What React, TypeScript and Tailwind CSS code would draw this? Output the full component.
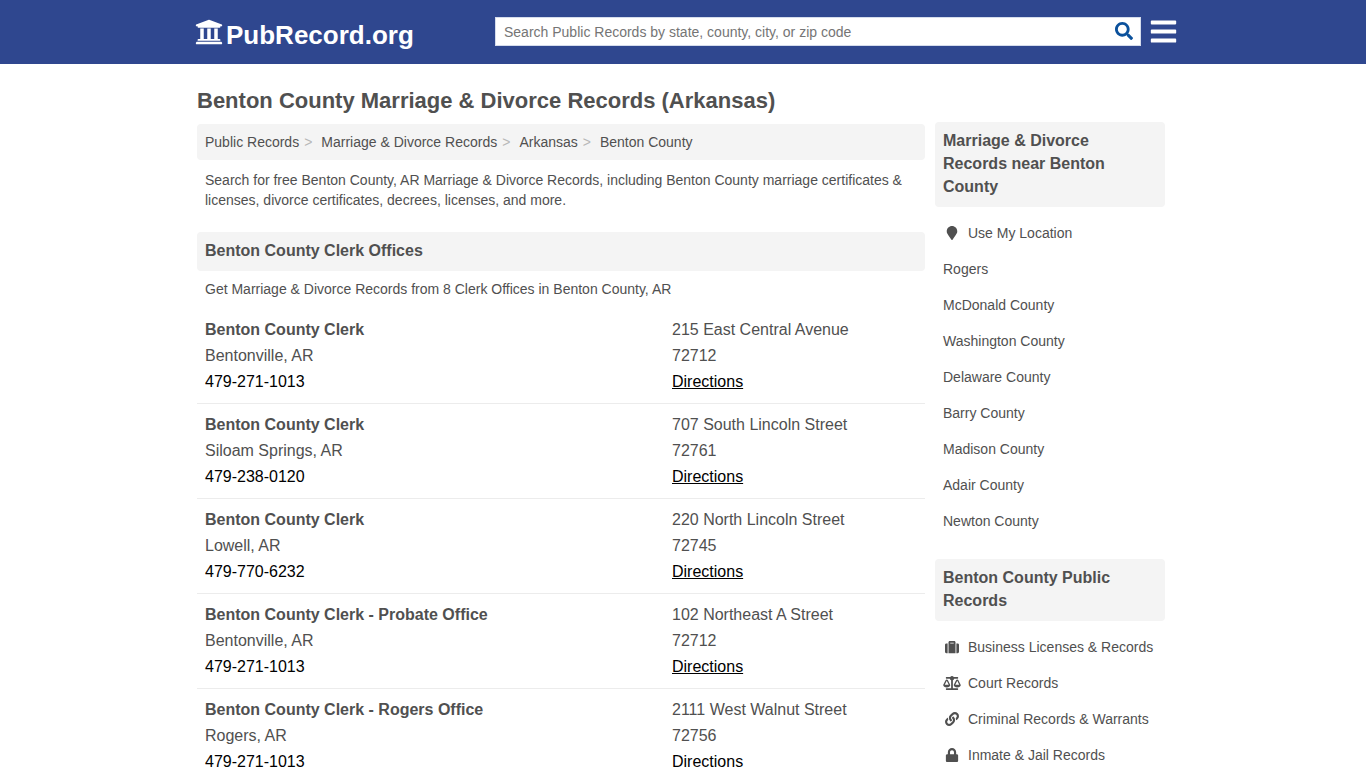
import type { ReactNode } from "react";
import {
  FaBalanceScale,
  FaBars,
  FaLink,
  FaLock,
  FaMapMarker,
  FaSearch,
  FaSuitcase,
  FaUniversity,
} from "react-icons/fa";

const crumbs = [
  "Public Records",
  "Marriage & Divorce Records",
  "Arkansas",
  "Benton County",
];

const offices = [
  {
    name: "Benton County Clerk",
    city: "Bentonville, AR",
    phone: "479-271-1013",
    street: "215 East Central Avenue",
    zip: "72712",
  },
  {
    name: "Benton County Clerk",
    city: "Siloam Springs, AR",
    phone: "479-238-0120",
    street: "707 South Lincoln Street",
    zip: "72761",
  },
  {
    name: "Benton County Clerk",
    city: "Lowell, AR",
    phone: "479-770-6232",
    street: "220 North Lincoln Street",
    zip: "72745",
  },
  {
    name: "Benton County Clerk - Probate Office",
    city: "Bentonville, AR",
    phone: "479-271-1013",
    street: "102 Northeast A Street",
    zip: "72712",
  },
  {
    name: "Benton County Clerk - Rogers Office",
    city: "Rogers, AR",
    phone: "479-271-1013",
    street: "2111 West Walnut Street",
    zip: "72756",
  },
];

type SideLink = { label: string; icon?: ReactNode };

const nearby: SideLink[] = [
  { label: "Use My Location", icon: <FaMapMarker /> },
  { label: "Rogers" },
  { label: "McDonald County" },
  { label: "Washington County" },
  { label: "Delaware County" },
  { label: "Barry County" },
  { label: "Madison County" },
  { label: "Adair County" },
  { label: "Newton County" },
];

const publicRecords: SideLink[] = [
  { label: "Business Licenses & Records", icon: <FaSuitcase /> },
  {
    label: "Court Records",
    icon: <FaBalanceScale className="h-3.5 w-[18px]" />,
  },
  { label: "Criminal Records & Warrants", icon: <FaLink /> },
  { label: "Inmate & Jail Records", icon: <FaLock /> },
];

function Header() {
  return (
    <header className="bg-[#2f478f]">
      <div className="mx-auto flex h-16 max-w-[990px] items-center pl-[7px]">
        <a href="#" className="flex items-center gap-[3px] text-white">
          <FaUniversity className="size-7" />
          <span className="pt-1.5 text-[26px] leading-8 font-bold">
            PubRecord.org
          </span>
        </a>
        <div className="ml-auto flex items-center gap-2 pb-0.5">
          <form className="flex h-[29px] w-[646px] border border-[#d5dcec] bg-white">
            <input
              type="text"
              aria-label="Search public records"
              placeholder="Search Public Records by state, county, city, or zip code"
              className="min-w-0 flex-1 px-2 pt-0.5 text-sm text-[#505050] outline-none placeholder:text-[#757575]"
            />
            <button
              type="button"
              aria-label="Search"
              className="px-[7px] text-[#0b519c]"
            >
              <FaSearch className="size-[18px]" />
            </button>
          </form>
          <button type="button" aria-label="Menu" className="text-white">
            <FaBars className="size-[29px]" />
          </button>
        </div>
      </div>
    </header>
  );
}

function SideSection({ title, links }: { title: string; links: SideLink[] }) {
  return (
    <section className="mb-5">
      <h2 className="rounded-sm bg-[#f4f4f4] px-2 pt-[7px] pb-[9px] text-base leading-[23px] font-bold">
        {title}
      </h2>
      <ul className="mt-2 px-2 text-sm">
        {links.map(({ label, icon }) => (
          <li key={label}>
            <a href="#" className="flex h-9 items-center">
              {icon && (
                <span className="mr-[7px] flex w-[18px] justify-center">
                  {icon}
                </span>
              )}
              {label}
            </a>
          </li>
        ))}
      </ul>
    </section>
  );
}

export default function App() {
  return (
    <div className="bg-white font-['Liberation_Sans',Arial,sans-serif] text-[#505050]">
      <Header />
      <div className="mx-auto max-w-[972px] pt-5 pr-1">
        <h1 className="text-[22px] leading-[34px] font-bold">
          Benton County Marriage &amp; Divorce Records (Arkansas)
        </h1>
        <div className="mt-1 flex gap-2.5">
          <main className="min-w-0 flex-1 pt-0.5">
            <nav aria-label="Breadcrumb">
              <ol className="flex h-9 items-center rounded-sm bg-[#f4f4f4] px-2 text-sm">
                {crumbs.map((crumb, i) => (
                  <li key={crumb}>
                    {i > 0 && (
                      <span className="mr-[9px] ml-[5px] text-[#b8b8b8]">
                        &gt;
                      </span>
                    )}
                    <a href="#">{crumb}</a>
                  </li>
                ))}
              </ol>
            </nav>
            <p className="px-2 pt-2.5 text-sm">
              Search for free Benton County, AR Marriage &amp; Divorce Records,
              including Benton County marriage certificates &amp; licenses,
              divorce certificates, decrees, licenses, and more.
            </p>
            <h2 className="mt-[22px] rounded-sm bg-[#f4f4f4] px-2 pt-[7px] pb-[9px] text-base leading-[23px] font-bold">
              Benton County Clerk Offices
            </h2>
            <p className="px-2 pt-2 pb-2.5 text-sm">
              Get Marriage &amp; Divorce Records from 8 Clerk Offices in Benton
              County, AR
            </p>
            <ul>
              {offices.map((office) => (
                <li
                  key={office.street}
                  className="grid grid-cols-[1fr_245px] border-b border-[#ececec] px-2 py-2 leading-[26px]"
                >
                  <div>
                    <h3 className="font-bold">{office.name}</h3>
                    <p>{office.city}</p>
                    <a href={`tel:${office.phone}`} className="text-black">
                      {office.phone}
                    </a>
                  </div>
                  <div>
                    <p>{office.street}</p>
                    <p>{office.zip}</p>
                    <a href="#" className="text-black underline">
                      Directions
                    </a>
                  </div>
                </li>
              ))}
            </ul>
          </main>
          <aside className="w-[230px] shrink-0">
            <SideSection
              title="Marriage & Divorce Records near Benton County"
              links={nearby}
            />
            <SideSection
              title="Benton County Public Records"
              links={publicRecords}
            />
          </aside>
        </div>
      </div>
    </div>
  );
}
